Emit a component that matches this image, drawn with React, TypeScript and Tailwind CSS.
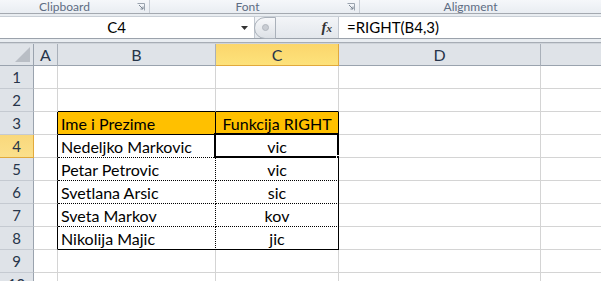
import React from "react";

const cols = [
  { key: "hdr", w: "w-[34px]" },
  { key: "A", w: "w-[24px]" },
  { key: "B", w: "w-[158px]" },
  { key: "C", w: "w-[123px]" },
  { key: "D", w: "w-[202px]" },
  { key: "E", w: "w-[160px] shrink-0" },
];

const data: Record<number, [string, string]> = {
  3: ["Ime i Prezime", "Funkcija RIGHT"],
  4: ["Nedeljko Markovic", "vic"],
  5: ["Petar Petrovic", "vic"],
  6: ["Svetlana Arsic", "sic"],
  7: ["Sveta Markov", "kov"],
  8: ["Nikolija Majic", "jic"],
};

const inTable = (r: number) => r >= 3 && r <= 8;

const cellBorder = (r: number, c: number) => {
  let right = "border-r-[#d4d4d4]";
  let bottom = "border-b-[#d4d4d4]";
  let rightStyle = "";
  let bottomStyle = "";
  if (c === 1 && inTable(r)) right = "border-r-black";
  if (c === 2 && inTable(r)) {
    right = "border-r-black";
    if (r > 3) rightStyle = "[border-right-style:dotted]";
  }
  if (c === 3 && inTable(r)) right = "border-r-black";
  if ((c === 2 || c === 3) && r === 2) bottom = "border-b-black";
  if ((c === 2 || c === 3) && inTable(r)) {
    bottom = "border-b-black";
    if (r >= 4 && r <= 7) bottomStyle = "[border-bottom-style:dotted]";
  }
  return `border-r border-b ${right} ${bottom} ${rightStyle} ${bottomStyle}`;
};

const RowHeader = ({ r }: { r: number }) => (
  <div
    className={`w-[34px] shrink-0 h-full flex items-center justify-center border-r border-b text-[15px] text-[#27354a] ${
      r === 4
        ? "bg-gradient-to-b from-[#f9d87c] to-[#fbe08b] border-r-[#e1a93c] border-b-[#e1a93c]"
        : "bg-[#dfe3e8] border-r-[#9aa3ae] border-b-[#c5cad1]"
    }`}
  >
    {r}
  </div>
);

const Cell = ({ r, c }: { r: number; c: number }) => {
  const row = data[r];
  const isHeader = r === 3 && (c === 2 || c === 3);
  const text = row && c === 2 ? row[0] : row && c === 3 ? row[1] : "";
  return (
    <div
      className={`${cols[c].w} shrink-0 h-full relative flex items-end pb-[1px] ${cellBorder(r, c)} ${
        isHeader ? "bg-[#ffc000]" : "bg-white"
      } ${c === 3 ? "justify-center" : "pl-[3px]"} text-[16px] leading-[19px] text-black`}
    >
      {text}
      {r === 4 && c === 3 && (
        <>
          <div className="absolute -left-[2px] -top-[2px] -right-[1px] -bottom-[1px] border-2 border-black pointer-events-none" />
          <div className="absolute -right-[3px] -bottom-[3px] w-[5px] h-[5px] bg-black border border-white" />
        </>
      )}
    </div>
  );
};

export default function App() {
  const rows = [1, 2, 3, 4, 5, 6, 7, 8, 9, 10];
  return (
    <div
      className="w-[601px] h-[281px] overflow-hidden bg-white select-none"
      style={{ fontFamily: "Lato, 'Open Sans', sans-serif" }}
    >
      {/* ribbon group labels */}
      <div className="h-[14px] flex bg-gradient-to-b from-[#f5f7fa] to-[#e9edf2] border-b border-b-[#a4a9b0] text-[12px] leading-[13px] text-[#5d6c83]">
        <div className="w-[150px] shrink-0 relative flex justify-center pr-[20px] border-r border-r-[#c8ced6]">
          <span>Clipboard</span>
          <Launcher />
        </div>
        <div className="w-[210px] shrink-0 relative flex justify-center pr-[14px] border-r border-r-[#c8ced6]">
          <span>Font</span>
          <Launcher />
        </div>
        <div className="flex-1 flex justify-center pr-[20px]">
          <span>Alignment</span>
        </div>
      </div>

      {/* formula bar */}
      <div className="h-[29px] bg-[#e9edf1] pt-[2px] border-b border-b-[#a7adb5]">
        <div className="h-[23px] flex border-t border-t-[#c9cfd6] border-b border-b-[#9ba2ab] bg-white">
          <div className="w-[254px] shrink-0 flex items-center relative text-[15px] text-black">
            <span className="flex-1 text-center pr-[8px]">C4</span>
            <svg width="7" height="4" viewBox="0 0 7 4" className="mr-[6px]">
              <path d="M0 0h7L3.5 4z" fill="#333" />
            </svg>
          </div>
          <div className="w-[84px] shrink-0 flex items-center bg-gradient-to-b from-[#f3f5f8] to-[#e3e7ec] border-l border-l-[#c2c8d0]">
            <div className="w-[22px] h-[22px] rounded-l-full -ml-[1px] border border-[#aab1ba] bg-gradient-to-b from-[#f7f8fa] to-[#dde1e6] flex items-center justify-center">
              <div className="w-[7px] h-[7px] rounded-full bg-[#c9cdd3] border border-[#b2b7be]" />
            </div>
            <div className="flex-1" />
            <span
              className="mr-[6px] text-[15px] italic font-bold text-[#333]"
              style={{ fontFamily: "'Liberation Serif', serif" }}
            >
              f<span className="text-[11px]">x</span>
            </span>
          </div>
          <div className="flex-1 flex items-center pl-[8px] text-[15px] text-black border-l border-l-[#c2c8d0]">
            =RIGHT(B4,3)
          </div>
        </div>
      </div>

      {/* column headers */}
      <div className="h-[23px] flex border-t border-t-[#cfd4da]">
        <div className="w-[34px] shrink-0 h-full bg-[#dfe3e8] border-r border-b border-r-[#9aa3ae] border-b-[#9aa3ae] flex items-end justify-end p-[3px]">
          <svg width="15" height="15" viewBox="0 0 15 15">
            <path d="M15 0V15H0z" fill="#b9bec5" />
          </svg>
        </div>
        {cols.slice(1).map((c) => (
          <div
            key={c.key}
            className={`${c.w} shrink-0 h-full flex items-center justify-center border-r border-b text-[16px] text-[#27354a] ${
              c.key === "C"
                ? "bg-gradient-to-b from-[#fbd66c] to-[#fde27b] border-r-[#e1a93c] border-b-[#e1a93c]"
                : "bg-[#dfe3e8] border-r-[#a9b0b9] border-b-[#9aa3ae]"
            }`}
          >
            {c.key}
          </div>
        ))}
      </div>

      {/* rows */}
      {rows.map((r) => (
        <div key={r} className="h-[23px] flex">
          <RowHeader r={r} />
          {[1, 2, 3, 4, 5].map((c) => (
            <Cell key={c} r={r} c={c} />
          ))}
        </div>
      ))}
    </div>
  );
}

function Launcher() {
  return (
    <svg width="8" height="8" viewBox="0 0 8 8" className="absolute right-[4px] top-[3px]">
      <path d="M0.5 0.5h7v7" fill="none" stroke="#9aa3ae" />
      <path d="M2 2l4 4M3.5 6H6V3.5" fill="none" stroke="#7d8794" />
    </svg>
  );
}
